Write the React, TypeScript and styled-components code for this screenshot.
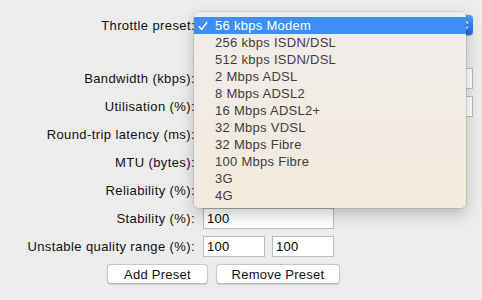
import React from 'react';
import styled, { createGlobalStyle } from 'styled-components';

const GlobalStyle = createGlobalStyle`
  html, body {
    margin: 0;
    padding: 0;
    background: #ececec;
  }
  body {
    font-family: "Liberation Sans", Arial, sans-serif;
    font-size: 13px;
    color: #000;
  }
`;

const Window = styled.div`
  position: relative;
  width: 482px;
  height: 300px;
  overflow: hidden;
  background: #ececec;
`;

const Form = styled.div`
  display: flex;
  flex-direction: column;
  padding-top: 15px;
`;

const Row = styled.div<{ $height?: number; $after?: number }>`
  display: grid;
  grid-template-columns: 195px auto;
  column-gap: 8px;
  align-items: center;
  height: ${(p) => p.$height ?? 21}px;
  margin-bottom: ${(p) => p.$after ?? 7}px;
`;

const Label = styled.label`
  text-align: right;
  white-space: nowrap;
  letter-spacing: 0.4px;
  color: #111;
`;

const Controls = styled.div`
  display: flex;
  gap: 7px;
`;

const Field = styled.input<{ $width: number }>`
  box-sizing: border-box;
  width: ${(p) => p.$width}px;
  height: 21px;
  margin: 0;
  padding: 0 3px;
  border: 1px solid #bdbdbd;
  background: #fff;
  font-family: inherit;
  font-size: 13px;
  letter-spacing: 0.3px;
  color: #000;
  outline: none;
`;

const PopupButton = styled.div`
  position: relative;
  box-sizing: border-box;
  width: 270px;
  height: 20px;
  border-radius: 4px;
  background: linear-gradient(to bottom, #4f9ffa, #1f6fe7);
  box-shadow: 0 0.5px 1px rgba(0, 0, 0, 0.3);
`;

const Arrows = styled.svg`
  position: absolute;
  right: 4px;
  top: 4px;
`;

const ButtonRow = styled.div`
  display: flex;
  gap: 8px;
  padding-left: 107px;
`;

const PushButton = styled.button<{ $width: number }>`
  box-sizing: border-box;
  width: ${(p) => p.$width}px;
  height: 20px;
  margin: 0;
  padding: 0;
  background: #fff;
  border: 1px solid #c6c6c6;
  border-bottom-color: #b4b4b4;
  border-radius: 4px;
  box-shadow: 0 0.5px 1px rgba(0, 0, 0, 0.12);
  font-family: inherit;
  font-size: 13px;
  letter-spacing: 0.25px;
  color: #111;
`;

const Menu = styled.div`
  position: absolute;
  left: 194px;
  top: 12px;
  width: 272px;
  padding: 5px 0 4px;
  border-radius: 5px;
  background: linear-gradient(to bottom, #efedeb, #f3e9db);
  box-shadow: 0 0 0 0.5px rgba(0, 0, 0, 0.18), 0 6px 16px rgba(0, 0, 0, 0.22);
`;

const MenuItem = styled.div<{ $selected?: boolean }>`
  position: relative;
  height: 17px;
  line-height: 17px;
  padding-left: 21px;
  white-space: nowrap;
  letter-spacing: 0.28px;
  color: ${(p) => (p.$selected ? '#fff' : '#404040')};
  background: ${(p) => (p.$selected ? '#3b8ff6' : 'transparent')};
`;

const Check = styled.svg`
  position: absolute;
  left: 4px;
  top: 4px;
`;

const presets = [
  '56 kbps Modem',
  '256 kbps ISDN/DSL',
  '512 kbps ISDN/DSL',
  '2 Mbps ADSL',
  '8 Mbps ADSL2',
  '16 Mbps ADSL2+',
  '32 Mbps VDSL',
  '32 Mbps Fibre',
  '100 Mbps Fibre',
  '3G',
  '4G',
];

export default function App() {
  return (
    <Window>
      <GlobalStyle />
      <Form>
        <Row $height={20} $after={33}>
          <Label>Throttle preset:</Label>
          <PopupButton>
            <Arrows width="7" height="12" viewBox="0 0 7 12">
              <path d="M1 4.5 L3.5 2 L6 4.5 M1 7.5 L3.5 10 L6 7.5" fill="none" stroke="#fff" strokeWidth="1.3" />
            </Arrows>
          </PopupButton>
        </Row>
        <Row>
          <Label>Bandwidth (kbps):</Label>
          <Field $width={270} defaultValue="56" />
        </Row>
        <Row>
          <Label>Utilisation (%):</Label>
          <Field $width={270} defaultValue="90" />
        </Row>
        <Row>
          <Label>Round-trip latency (ms):</Label>
          <Field $width={131} defaultValue="200" />
        </Row>
        <Row>
          <Label>MTU (bytes):</Label>
          <Field $width={131} defaultValue="1500" />
        </Row>
        <Row>
          <Label>Reliability (%):</Label>
          <Field $width={131} defaultValue="100" />
        </Row>
        <Row>
          <Label>Stability (%):</Label>
          <Field $width={131} defaultValue="100" />
        </Row>
        <Row>
          <Label>Unstable quality range (%):</Label>
          <Controls>
            <Field $width={62} defaultValue="100" />
            <Field $width={62} defaultValue="100" />
          </Controls>
        </Row>
        <ButtonRow>
          <PushButton $width={101}>Add Preset</PushButton>
          <PushButton $width={124}>Remove Preset</PushButton>
        </ButtonRow>
      </Form>
      <Menu>
        {presets.map((name, i) => (
          <MenuItem key={name} $selected={i === 0}>
            {i === 0 && (
              <Check width="10" height="10" viewBox="0 0 10 10">
                <path d="M0.8 5.2 L3.6 8.4 L9.2 1" fill="none" stroke="#fff" strokeWidth="1.5" />
              </Check>
            )}
            {name}
          </MenuItem>
        ))}
      </Menu>
    </Window>
  );
}
